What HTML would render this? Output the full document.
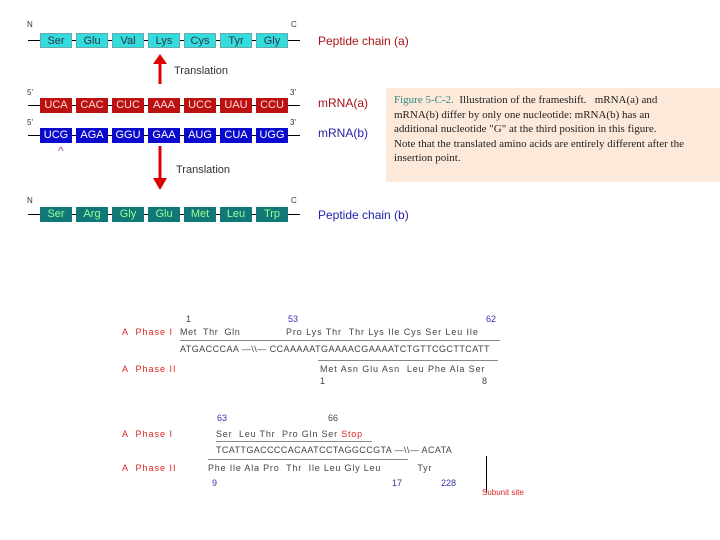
<!DOCTYPE html>
<html><head><meta charset="utf-8"><style>
body{margin:0;width:720px;height:540px;background:#fff;position:relative;overflow:hidden;font-family:"Liberation Sans",sans-serif}
.a{position:absolute;white-space:nowrap}
.b{position:absolute;width:32px;height:15px;font-size:11px;line-height:15px;text-align:center;box-sizing:border-box}
.c{background:#33dddd;color:#334;border:1px solid #6aa}
.r{background:#bb1111;color:#fdd}
.u{background:#0a0acc;color:#fff}
.t{background:#117777;color:#9f9}
.ln{position:absolute;height:1px;background:#000}
.s{font-size:8px;color:#333}
.lab{font-size:12px;color:#a11}
.sm{font-size:9px;color:#444}
.rd{font-size:9px;color:#d22}
.bl{font-size:9px;color:#33a}
</style></head><body>
<div class="ln" style="left:28px;top:40px;width:272px"></div>
<div class="ln" style="left:28px;top:105px;width:272px"></div>
<div class="ln" style="left:28px;top:135px;width:272px"></div>
<div class="ln" style="left:28px;top:214px;width:272px"></div>
<div class="a s" style="left:27px;top:20px">N</div><div class="a s" style="left:291px;top:20px">C</div>
<div class="a s" style="left:27px;top:88px">5'</div><div class="a s" style="left:290px;top:88px">3'</div>
<div class="a s" style="left:27px;top:118px">5'</div><div class="a s" style="left:290px;top:118px">3'</div>
<div class="a s" style="left:27px;top:196px">N</div><div class="a s" style="left:291px;top:196px">C</div>

<div class="b c" style="left:40px;top:33px">Ser</div><div class="b c" style="left:76px;top:33px">Glu</div><div class="b c" style="left:112px;top:33px">Val</div><div class="b c" style="left:148px;top:33px">Lys</div><div class="b c" style="left:184px;top:33px">Cys</div><div class="b c" style="left:220px;top:33px">Tyr</div><div class="b c" style="left:256px;top:33px">Gly</div>
<div class="b r" style="left:40px;top:98px">UCA</div><div class="b r" style="left:76px;top:98px">CAC</div><div class="b r" style="left:112px;top:98px">CUC</div><div class="b r" style="left:148px;top:98px">AAA</div><div class="b r" style="left:184px;top:98px">UCC</div><div class="b r" style="left:220px;top:98px">UAU</div><div class="b r" style="left:256px;top:98px">CCU</div>
<div class="b u" style="left:40px;top:128px">UCG</div><div class="b u" style="left:76px;top:128px">AGA</div><div class="b u" style="left:112px;top:128px">GGU</div><div class="b u" style="left:148px;top:128px">GAA</div><div class="b u" style="left:184px;top:128px">AUG</div><div class="b u" style="left:220px;top:128px">CUA</div><div class="b u" style="left:256px;top:128px">UGG</div>
<div class="b t" style="left:40px;top:207px">Ser</div><div class="b t" style="left:76px;top:207px">Arg</div><div class="b t" style="left:112px;top:207px">Gly</div><div class="b t" style="left:148px;top:207px">Glu</div><div class="b t" style="left:184px;top:207px">Met</div><div class="b t" style="left:220px;top:207px">Leu</div><div class="b t" style="left:256px;top:207px">Trp</div>
<div class="a" style="left:58px;top:144px;font-size:12px;color:#a4a">^</div>

<svg class="a" style="left:150px;top:54px" width="20" height="140">
<path d="M10 30V6" stroke="#d00" stroke-width="3"/><path d="M3 10L10 0L17 10Z" fill="#d00"/>
<path d="M10 92V128" stroke="#d00" stroke-width="3"/><path d="M3 124L10 136L17 124Z" fill="#d00"/>
</svg>
<div class="a" style="left:174px;top:65px;font-size:11px;color:#333">Translation</div>
<div class="a" style="left:176px;top:164px;font-size:11px;color:#333">Translation</div>

<div class="a lab" style="left:318px;top:34px">Peptide chain (a)</div>
<div class="a lab" style="left:318px;top:96px">mRNA(a)</div>
<div class="a" style="left:318px;top:126px;font-size:12px;color:#22a">mRNA(b)</div>
<div class="a" style="left:318px;top:208px;font-size:12px;color:#22a">Peptide chain (b)</div>

<div class="a" style="left:386px;top:88px;width:334px;height:94px;background:#fce9d9"></div>
<div class="a" style="left:394px;top:93px;font-family:'Liberation Serif',serif;font-size:11px;line-height:14.5px;color:#222">
<span style="color:#388">Figure 5-C-2.</span> &nbsp;Illustration of the frameshift. &nbsp; mRNA(a) and<br>mRNA(b) differ by only one nucleotide: mRNA(b) has an<br>additional nucleotide "G" at the third position in this figure.<br>Note that the translated amino acids are entirely different after the<br>insertion point.</div>

<div class="a sm" style="left:186px;top:314px">1</div>
<div class="a bl" style="left:288px;top:314px">53</div>
<div class="a bl" style="left:486px;top:314px">62</div>
<div class="a rd" style="left:122px;top:327px;letter-spacing:1px">A &nbsp;Phase I</div>
<div class="a rd" style="left:122px;top:364px;letter-spacing:1px">A &nbsp;Phase II</div>
<div class="a sm" style="left:180px;top:327px;letter-spacing:0.6px">Met &nbsp;Thr &nbsp;Gln</div>
<div class="a sm" style="left:286px;top:327px;letter-spacing:0.9px">Pro Lys Thr &nbsp;Thr Lys Ile Cys Ser Leu Ile</div>
<div class="a sm" style="left:180px;top:344px;letter-spacing:0.45px">ATGACCCAA —\\— CCAAAAATGAAAACGAAAATCTGTTCGCTTCATT</div>
<div class="a sm" style="left:320px;top:364px;letter-spacing:0.9px">Met Asn Glu Asn &nbsp;Leu Phe Ala Ser</div>
<div class="a sm" style="left:320px;top:376px">1</div><div class="a sm" style="left:482px;top:376px">8</div>
<div class="ln" style="left:180px;top:340px;width:320px;background:#888"></div>
<div class="ln" style="left:318px;top:360px;width:180px;background:#888"></div>

<div class="a bl" style="left:217px;top:413px">63</div>
<div class="a sm" style="left:328px;top:413px">66</div>
<div class="a rd" style="left:122px;top:429px;letter-spacing:1px">A &nbsp;Phase I</div>
<div class="a rd" style="left:122px;top:463px;letter-spacing:1px">A &nbsp;Phase II</div>
<div class="a sm" style="left:216px;top:429px;letter-spacing:0.8px">Ser &nbsp;Leu Thr &nbsp;Pro Gln Ser <span style="color:#d22">Stop</span></div>
<div class="a sm" style="left:216px;top:445px;letter-spacing:0.4px">TCATTGACCCCACAATCCTAGGCCGTA —\\— ACATA</div>
<div class="a sm" style="left:208px;top:463px;letter-spacing:0.8px">Phe Ile Ala Pro &nbsp;Thr &nbsp;Ile Leu Gly Leu &nbsp; &nbsp; &nbsp; &nbsp; &nbsp; Tyr</div>
<div class="a bl" style="left:212px;top:478px">9</div><div class="a bl" style="left:392px;top:478px">17</div><div class="a bl" style="left:441px;top:478px">228</div>
<div class="ln" style="left:216px;top:441px;width:156px;background:#888"></div>
<div class="ln" style="left:208px;top:459px;width:200px;background:#888"></div>
<div class="ln" style="left:486px;top:456px;width:1px;height:36px"></div>
<div class="a rd" style="left:482px;top:488px;font-size:8px">Subunit site</div>
</body></html>
